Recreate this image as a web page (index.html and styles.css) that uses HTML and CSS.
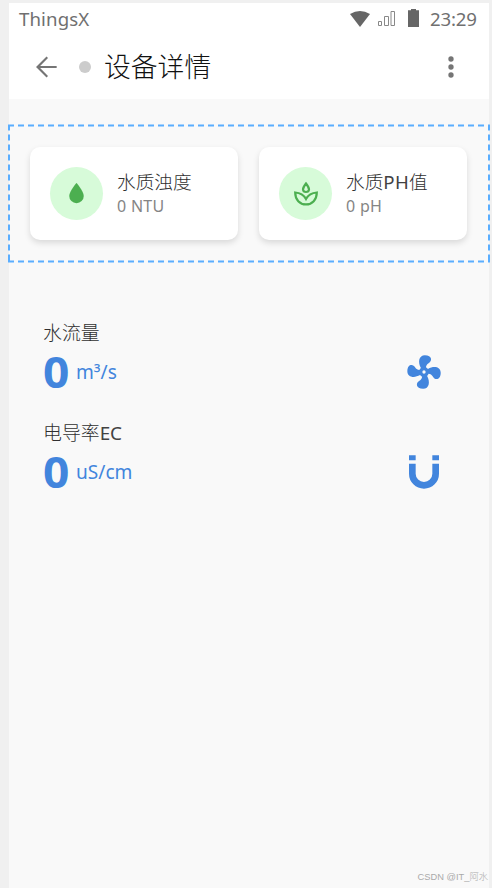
FILE: index.html
```html
<!DOCTYPE html>
<html lang="zh-CN">
<head>
<meta charset="utf-8">
<title>设备详情</title>
<link rel="stylesheet" href="styles.css">
</head>
<body>
<main class="phone">
  <header class="header">
    <div class="status">
      <span class="brand">ThingsX</span>
      <svg class="wifi" viewBox="0 0 20 16"><path d="M0 3Q10-3 20 3L10 16Z"/></svg>
      <svg class="signal" viewBox="0 0 17 15"><path d="M.5 10.500h3v4h-3zM6.500 5.500h4v9h-4zM13 .5h3.500v14H13z"/></svg>
      <svg class="battery" viewBox="0 0 11 18"><path d="M3 0h5v1.300H11V18H0V1.300h3z"/></svg>
      <span class="time">23:29</span>
    </div>
    <div class="appbar">
      <svg class="back" viewBox="0 0 24 24"><path d="M20,11.2V12.800H7.600L13.5,18.7L12.4,19.8L4.500,12L12.4,4.2L13.5,5.3L7.600,11.2H20Z"/></svg>
      <span class="dot"></span>
      <h1 class="title">设备详情</h1>
      <svg class="more" viewBox="0 0 24 24"><path d="M12,16A2,2 0 0,1 14,18A2,2 0 0,1 12,20A2,2 0 0,1 10,18A2,2 0 0,1 12,16M12,10A2,2 0 0,1 14,12A2,2 0 0,1 12,14A2,2 0 0,1 10,12A2,2 0 0,1 12,10M12,4A2,2 0 0,1 14,6A2,2 0 0,1 12,8A2,2 0 0,1 10,6A2,2 0 0,1 12,4Z"/></svg>
    </div>
  </header>
  <section class="selected">
    <svg class="outline" viewBox="0 0 482 139"><path d="M0 1.500H482M0 137.500H482M1 .5V138.500M481 .5V138.500"/></svg>
    <article class="card">
      <div class="badge"><svg viewBox="0 0 24 24"><path d="M12,20A6,6 0 0,1 6,14C6,10 12,3.25 12,3.25C12,3.25 18,10 18,14A6,6 0 0,1 12,20Z"/></svg></div>
      <div class="info"><div class="name">水质浊度</div><div class="reading">0 NTU</div></div>
    </article>
    <article class="card">
      <div class="badge"><svg class="lotus" viewBox="0 0 26 26"><path d="M13 2.500C10.800 5.300 10 7 10 8.500Q10.200 11 13 11T16 8.500C16 7 15.200 5.300 13 2.500ZM2.200 11.500C2.200 18.700 6.800 23.400 13 23.400S23.800 18.700 23.800 11.500C18.500 11.900 15.200 14 13 18C10.800 14 7.500 11.900 2.200 11.500Z"/></svg></div>
      <div class="info"><div class="name">水质<span class="latin">PH</span>值</div><div class="reading">0 pH</div></div>
    </article>
  </section>
  <section class="metrics">
    <div class="metric">
      <div class="label">水流量</div>
      <div class="row"><strong>0</strong><span class="unit">m<span class="power">³</span>/s</span>
        <svg viewBox="0 0 24 24"><path d="M12,11A1,1 0 0,0 11,12A1,1 0 0,0 12,13A1,1 0 0,0 13,12A1,1 0 0,0 12,11M12.5,2C17,2 17.11,5.57 14.75,6.75C13.76,7.24 13.32,8.29 13.13,9.22C13.61,9.42 14.03,9.73 14.35,10.13C18.05,8.13 22.03,8.92 22.03,12.5C22.03,17 18.46,17.1 17.28,14.73C16.78,13.74 15.72,13.3 14.79,13.11C14.59,13.59 14.28,14 13.88,14.34C15.87,18.03 15.08,22 11.5,22C7,22 6.91,18.42 9.27,17.24C10.25,16.75 10.69,15.71 10.89,14.79C10.4,14.59 9.97,14.27 9.65,13.87C5.96,15.85 2,15.07 2,11.5C2,7 5.56,6.89 6.74,9.26C7.24,10.25 8.29,10.68 9.22,10.87C9.41,10.39 9.73,9.97 10.14,9.65C8.15,5.96 8.94,2 12.5,2Z"/></svg></div>
    </div>
    <div class="metric">
      <div class="label">电导率<span class="latin">EC</span></div>
      <div class="row"><strong>0</strong><span class="unit">uS/cm</span>
        <svg viewBox="0 0 24 24"><path d="M3,7V13A9,9 0 0,0 12,22A9,9 0 0,0 21,13V7H17V13A5,5 0 0,1 12,18A5,5 0 0,1 7,13V7M17,5H21V2H17M3,5H7V2H3"/></svg></div>
    </div>
  </section>
  <footer class="credit">CSDN @IT_阿水</footer>
</main>
</body>
</html>
```
FILE: styles.css
```css
* { box-sizing: border-box; }
body {
  margin: 0;
  height: 888px;
  padding: 3px 3px 0 9px;
  overflow: hidden;
  background: #f0f0f0;
  font-family: "Noto Sans", "Noto Sans CJK SC", sans-serif;
  font-weight: 300;
}
svg { display: block; flex: none; fill: currentColor; }
.phone { display: flex; flex-direction: column; height: 885px; background: #f9f9f9; }
.header { height: 96px; background: #fff; }
.status { display: flex; align-items: center; height: 32px; padding: 0 11px 0 10px; color: #666; font-size: 18.670px; font-weight: 400; line-height: 32px; }
.brand { margin-right: auto; color: #707070; letter-spacing: .1px; }
.wifi { width: 20px; height: 16px; margin: -1px 8px 0 0; }
.signal { width: 17px; height: 15px; margin: -2px 13px 0 0; fill: none; stroke: #888; }
.battery { width: 11px; height: 18px; margin: -2px 11px 0 0; }
.time { width: 48px; color: #707070; letter-spacing: -.2px; white-space: nowrap; }
.appbar { display: flex; align-items: center; height: 64px; padding: 0 22px 0 21px; color: #757575; }
.back, .more { width: 32px; height: 32px; }
.dot { width: 12px; height: 12px; margin: 0 14px 0 17px; border-radius: 50%; background: #ccc; }
.title { margin: 0 auto 0 -1px; color: #111; font-size: 26.800px; font-weight: 300; line-height: 40px; }
.selected { position: relative; display: flex; gap: 21px; height: 139px; margin: 25px -1px 0; padding: 23px 23px 23px 22px; }
.outline { position: absolute; top: 0; left: 0; width: 482px; height: 139px; fill: none; stroke: #5aaeff; stroke-width: 2; stroke-dasharray: 6 4; }
.card { display: flex; align-items: center; width: 208px; height: 93px; padding-left: 20px; border-radius: 10px; background: #fff; box-shadow: 0 3px 6px rgba(0,0,0,.13); }
.badge { display: grid; place-items: center; width: 53px; height: 53px; margin-right: 14px; border-radius: 50%; background: #d7fbd9; color: #4caf50; }
.badge svg { width: 29px; height: 29px; }
.badge .lotus { width: 26px; height: 26px; fill: none; stroke: currentColor; stroke-width: 2.200; }
.info { white-space: nowrap; }
.name { height: 25px; color: #303030; font-size: 18.670px; line-height: 24px; }
.latin { color: #424242; font-weight: 400; letter-spacing: .3px; }
.reading { height: 22px; color: #858585; font-size: 16px; font-weight: 400; line-height: 22px; letter-spacing: .3px; }
.metrics { padding: 55px 45px 0 34px; }
.metric { height: 100px; }
.label { height: 29px; color: #303030; font-size: 18.900px; line-height: 30px; }
.label .latin { letter-spacing: -.3px; }
.row { display: flex; align-items: center; height: 49px; color: #4285dd; }
.row strong { width: 33px; font-family: "Open Sans", "Noto Sans", sans-serif; font-size: 43.500px; font-weight: 700; line-height: 49px; transform: scaleX(1.06); transform-origin: left; }
.unit { margin-right: auto; font-size: 19.100px; font-weight: 400; }
.power { position: relative; top: 1px; }
.row svg { width: 40px; height: 40px; }
.credit { margin: auto 1px 4px auto; color: #aaa; font-family: "Liberation Sans", "Noto Sans CJK SC", sans-serif; font-size: 9.300px; line-height: 14px; }
```
